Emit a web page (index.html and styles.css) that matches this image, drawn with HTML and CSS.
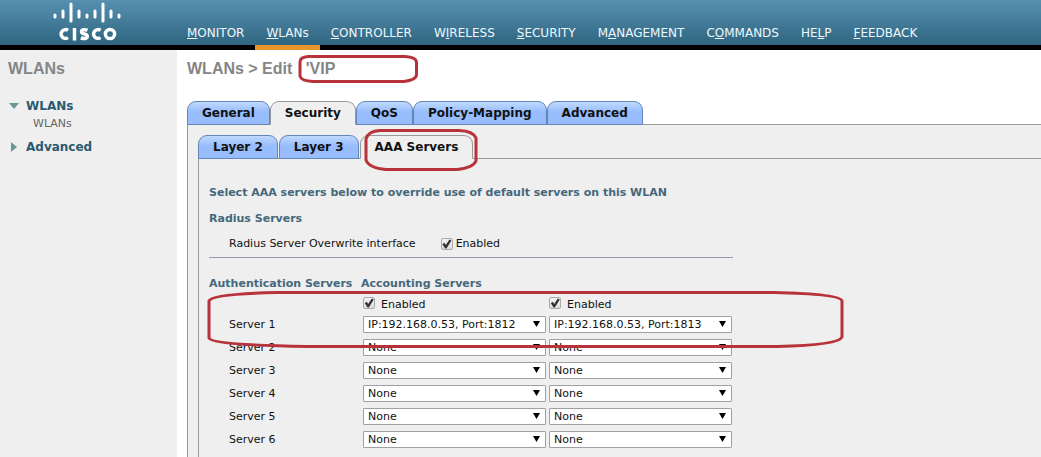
FILE: index.html
```html
<!DOCTYPE html>
<html lang="en">
<head>
<meta charset="utf-8">
<title>WLANs &gt; Edit</title>
<link rel="stylesheet" href="styles.css">
</head>
<body>
<header class="top">
  <div class="brand">
    <svg class="logo" viewBox="0 0 68 41" role="img" aria-label="Cisco">
      <g stroke="#fff" stroke-width="3" stroke-linecap="round">
        <path d="M2 15v2M10 11v6M18 4v17M26 11v6M34 15v2M42 11v6M50 4v17M58 11v6M66 15v2"/>
      </g>
      <g fill="none" stroke="#fff" stroke-width="3.500">
        <path d="M15 30.400a4.400 4.400 0 1 0 0 7.200M21.500 28v12.500M34.500 30.200c-3-1-6-.7-6 1.500 0 3 5.800 1.500 5.800 4.500 0 2.600-3.500 2.800-6.500 1.800M47.500 30.400a4.400 4.400 0 1 0 0 7.200"/>
        <circle cx="57" cy="34" r="4.600"/>
      </g>
    </svg>
  </div>
  <nav class="menu">
    <a href="#"><u>M</u>ONITOR</a>
    <a href="#" class="current"><u>W</u>LANs</a>
    <a href="#"><u>C</u>ONTROLLER</a>
    <a href="#">W<u>I</u>RELESS</a>
    <a href="#"><u>S</u>ECURITY</a>
    <a href="#">M<u>A</u>NAGEMENT</a>
    <a href="#">C<u>O</u>MMANDS</a>
    <a href="#">HE<u>L</u>P</a>
    <a href="#"><u>F</u>EEDBACK</a>
  </nav>
</header>
<div class="body">
  <aside class="side">
    <h2 class="title">WLANs</h2>
    <ul class="tree">
      <li><a href="#" class="branch"><svg class="tri" viewBox="0 0 10 10"><path d="M0 2h10L5 8z"/></svg>WLANs</a>
        <a href="#" class="leaf">WLANs</a></li>
      <li><a href="#" class="branch"><svg class="tri" viewBox="0 0 10 10"><path d="M2 0v10l6-5z"/></svg>Advanced</a></li>
    </ul>
  </aside>
  <main class="main">
    <h1 class="title">WLANs &gt; Edit <span class="marked vip">'VIP
      <svg class="mark" viewBox="0 0 120 30"><path d="M10 2.500H107Q118 3 118.500 8V21Q118 26 106 27.500H15Q3 27 2 22V8Q2 3 10 2.500z"/></svg></span></h1>
    <div class="tabs">
      <button type="button" class="tab">General</button>
      <button type="button" class="tab on">Security</button>
      <button type="button" class="tab">QoS</button>
      <button type="button" class="tab">Policy-Mapping</button>
      <button type="button" class="tab">Advanced</button>
    </div>
    <div class="panel">
      <div class="tabs inner">
        <button type="button" class="tab">Layer 2</button>
        <button type="button" class="tab">Layer 3</button>
        <span class="marked"><button type="button" class="tab on">AAA Servers</button>
          <svg class="mark" viewBox="0 0 114 44"><path d="M16 2.500H95Q109 3 112 10V33Q109 40 93 41.500H22Q5 40 2 32V11Q4 3 16 2.500z"/></svg></span>
      </div>
      <div class="panel content">
        <h3>Select AAA servers below to override use of default servers on this WLAN</h3>
        <h3>Radius Servers</h3>
        <div class="option">
          <span>Radius Server Overwrite interface</span>
          <label><input type="checkbox" checked>Enabled</label>
        </div>
        <hr>
        <div class="marked servers">
          <table>
            <thead>
              <tr><th>Authentication Servers</th><th colspan="2">Accounting Servers</th></tr>
            </thead>
            <tbody>
              <tr class="enable"><td></td>
                <td><label><input type="checkbox" checked>Enabled</label></td>
                <td><label><input type="checkbox" checked>Enabled</label></td></tr>
              <tr><td>Server 1</td>
                <td><div class="pick"><select aria-label="Server 1 authentication"><option>IP:192.168.0.53, Port:1812</option></select><svg viewBox="0 0 8 8"><path d="M0 1h7L3.500 7z"/></svg></div></td>
                <td><div class="pick"><select aria-label="Server 1 accounting"><option>IP:192.168.0.53, Port:1813</option></select><svg viewBox="0 0 8 8"><path d="M0 1h7L3.500 7z"/></svg></div></td></tr>
              <tr><td>Server 2</td>
                <td><div class="pick"><select aria-label="Server 2 authentication"><option>None</option></select><svg viewBox="0 0 8 8"><path d="M0 1h7L3.500 7z"/></svg></div></td>
                <td><div class="pick"><select aria-label="Server 2 accounting"><option>None</option></select><svg viewBox="0 0 8 8"><path d="M0 1h7L3.500 7z"/></svg></div></td></tr>
              <tr><td>Server 3</td>
                <td><div class="pick"><select aria-label="Server 3 authentication"><option>None</option></select><svg viewBox="0 0 8 8"><path d="M0 1h7L3.500 7z"/></svg></div></td>
                <td><div class="pick"><select aria-label="Server 3 accounting"><option>None</option></select><svg viewBox="0 0 8 8"><path d="M0 1h7L3.500 7z"/></svg></div></td></tr>
              <tr><td>Server 4</td>
                <td><div class="pick"><select aria-label="Server 4 authentication"><option>None</option></select><svg viewBox="0 0 8 8"><path d="M0 1h7L3.500 7z"/></svg></div></td>
                <td><div class="pick"><select aria-label="Server 4 accounting"><option>None</option></select><svg viewBox="0 0 8 8"><path d="M0 1h7L3.500 7z"/></svg></div></td></tr>
              <tr><td>Server 5</td>
                <td><div class="pick"><select aria-label="Server 5 authentication"><option>None</option></select><svg viewBox="0 0 8 8"><path d="M0 1h7L3.500 7z"/></svg></div></td>
                <td><div class="pick"><select aria-label="Server 5 accounting"><option>None</option></select><svg viewBox="0 0 8 8"><path d="M0 1h7L3.500 7z"/></svg></div></td></tr>
              <tr><td>Server 6</td>
                <td><div class="pick"><select aria-label="Server 6 authentication"><option>None</option></select><svg viewBox="0 0 8 8"><path d="M0 1h7L3.500 7z"/></svg></div></td>
                <td><div class="pick"><select aria-label="Server 6 accounting"><option>None</option></select><svg viewBox="0 0 8 8"><path d="M0 1h7L3.500 7z"/></svg></div></td></tr>
            </tbody>
          </table>
          <svg class="mark" viewBox="0 0 638 60"><path d="M70 3.500H566Q634 5 635 12V48Q632 56 570 57.500H100Q4 56 2 49V12Q4 5 70 3.500z"/></svg>
        </div>
      </div>
    </div>
  </main>
</div>
</body>
</html>
```
FILE: styles.css
```css
* { box-sizing: border-box; }
body {
  margin: 0;
  min-height: 100vh;
  display: flex;
  flex-direction: column;
  background: #fff;
  color: #111;
  font: 11px/16px "DejaVu Sans", Verdana, sans-serif;
}
a { text-decoration: none; }

.top {
  display: flex;
  height: 50px;
  background: linear-gradient(#5790b0, #2f6580) #000 no-repeat 0 0 / 100% 45px;
}
.brand { width: 176px; padding-left: 53px; flex: none; }
.logo { display: block; width: 68px; height: 41px; }
.menu { display: flex; }
.menu a {
  padding: 25px 11px 0;
  color: #eef8fb;
  font: 12px/17px "DejaVu Sans", Verdana, sans-serif;
}
.menu .current { border-bottom: 5px solid #e8962a; }

.body { display: flex; flex: 1; }
.side { flex: none; width: 177px; background: #efefef; padding: 8px; }
.title {
  margin: 0;
  color: #858585;
  font: bold 16px/22px "Liberation Sans", Arial, sans-serif;
}
.tree { list-style: none; margin: 18px 0 0; padding: 0; }
.tree li { margin-bottom: 7px; }
.branch {
  display: flex;
  align-items: center;
  gap: 7px;
  padding-left: 1px;
  color: #2a5a70;
  font-weight: bold;
  font-size: 12px;
}
.tri { width: 10px; height: 10px; fill: #6b9696; }
.leaf { display: block; padding: 2px 0 0 25px; color: #666; }

.main { flex: 1; padding: 8px 0 0 10px; display: flex; flex-direction: column; }
.main > .tabs { margin-top: 21px; }
.marked { position: relative; }
.vip { margin-left: 9px; }
.mark {
  position: absolute;
  fill: none;
  stroke: #b8323a;
  stroke-width: 3;
  pointer-events: none;
}
.vip .mark { left: -8px; top: -6px; width: 120px; height: 30px; }
.tabs .mark { left: 4px; top: -7px; width: 114px; height: 44px; }
.servers .mark { left: -2px; top: 13px; width: 638px; height: 60px; }

.tabs { display: flex; margin-bottom: -1px; }
.tabs.inner { gap: 1px; }
.tab {
  position: relative;
  height: 24px;
  padding: 0 14px;
  border: 1px solid #6386b8;
  border-radius: 9px 9px 0 0;
  background: linear-gradient(#c0dafd, #97bdfd 45%);
  color: #111;
  font: bold 12px/20px "DejaVu Sans", Verdana, sans-serif;
}
.tab.on {
  border-color: #999;
  border-bottom-color: #efefef;
  background: #efefef;
}
.panel {
  flex: 1;
  display: flex;
  flex-direction: column;
  border: solid #999;
  border-width: 1px 0 0 1px;
  background: #efefef;
  padding: 10px 0 0 10px;
}
.content { padding-top: 26px; }
h3, th { margin: 0; color: #44687c; font-size: 11px; font-weight: bold; }
h3 + h3 { margin-top: 10px; }
.option { display: flex; gap: 25px; margin-top: 9px; padding-left: 20px; }
label { display: inline-flex; align-items: center; gap: 3px; }
hr {
  width: 524px;
  max-width: 100%;
  margin: 5px 0 18px;
  border: 0;
  border-top: 1px solid #939bb8;
}
input[type="checkbox"] {
  appearance: none;
  width: 12px;
  height: 12px;
  margin: 0;
  border: 1px solid #aaa;
  border-radius: 2px;
  background: linear-gradient(#f2f2f2, #ddd);
}
input:checked::before {
  content: "";
  display: block;
  height: 10px;
  background: #333;
  clip-path: polygon(8% 52%, 28% 38%, 42% 60%, 78% 4%, 98% 14%, 48% 94%, 36% 94%);
}

table { border-collapse: collapse; table-layout: fixed; width: 524px; }
th { padding: 0; text-align: left; }
th:first-child { width: 152px; white-space: nowrap; }
td { height: 23px; padding: 0 1px 0 2px; vertical-align: middle; }
td:first-child { padding-left: 20px; }
.enable td { height: 20px; padding-top: 5px; line-height: 14px; }
.enable label { display: flex; gap: 6px; }
.enable input { margin-bottom: 4px; }
.pick { position: relative; height: 17px; }
.pick select {
  appearance: none;
  display: block;
  width: 100%;
  height: 17px;
  padding: 0 4px;
  border: 1px solid #a0a0a0;
  border-radius: 1px;
  background: #fff;
  color: #111;
  font: 11px/15px "DejaVu Sans", Verdana, sans-serif;
}
.pick svg { position: absolute; right: 5px; top: 4px; width: 8px; height: 8px; pointer-events: none; }
```
